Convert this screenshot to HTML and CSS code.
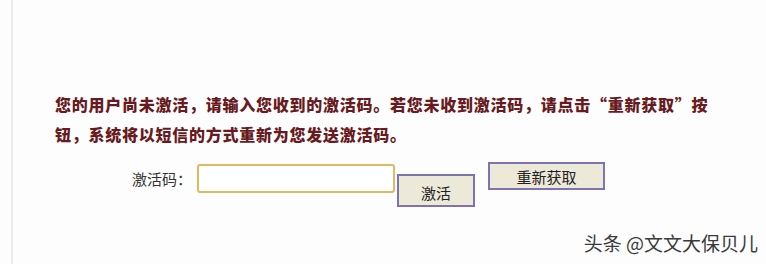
FILE: index.html
```html
<!DOCTYPE html>
<html lang="zh-CN">
<head>
    <meta charset="UTF-8">
    <title>激活账户</title>
    <link rel="stylesheet" href="styles.css">
</head>
<body>
    <div class="page">
        <p class="notice">您的用户尚未激活，请输入您收到的激活码。若您未收到激活码，请点击“重新获取”按钮，系统将以短信的方式重新为您发送激活码。</p>

        <div class="form-row">
            <label class="label" for="code">激活码：</label>
            <input class="code-input" type="text" id="code">
            <button class="btn btn-activate">激活</button>
            <button class="btn btn-resend">重新获取</button>
        </div>
    </div>

    <div class="watermark">头条 @文文大保贝儿</div>
</body>
</html>
```

FILE: styles.css
```css
body {
    margin: 0;
    background-color: #fdfdfd;
    font-family: "Noto Sans CJK SC", "Noto Sans", sans-serif;
    height: 264px;
    overflow: hidden;
}

.page {
    margin-left: 11px;
    height: 264px;
    border-left: 2px solid #ebebeb;
    padding-top: 89px;
    box-sizing: border-box;
}

.notice {
    margin: 0 0 0 42px;
    width: 660px;
    font-size: 16px;
    font-weight: 900;
    letter-spacing: 0.75px;
    line-height: 30px;
    color: #681a1e;
}

.form-row {
    display: flex;
    align-items: flex-start;
    margin-top: 13px;
    margin-left: 119px;
}

.label {
    font-size: 15px;
    line-height: 20px;
    color: #333333;
    margin-top: 7px;
    margin-right: 5px;
}

.code-input {
    width: 198px;
    height: 29px;
    margin: 2px 2px 0 0;
    box-sizing: border-box;
    border: 2px solid #e2b963;
    border-radius: 3px;
    background-color: #ffffff;
    outline: none;
}

.btn {
    box-sizing: border-box;
    border: 2px solid #7c72b4;
    background-color: #ece9d8;
    color: #222222;
    font-family: "Noto Sans CJK SC", sans-serif;
    font-size: 15px;
    padding: 0;
}

.btn-activate {
    width: 78px;
    height: 33px;
    margin-top: 12px;
    padding-top: 4px;
}

.btn-resend {
    width: 117px;
    height: 28px;
    margin-left: 13px;
}

.watermark {
    position: absolute;
    right: 8px;
    top: 229px;
    font-size: 19px;
    color: #3a3a3a;
    text-shadow: 0 0 2px #ffffff, 0 0 1px #ffffff;
}
```
